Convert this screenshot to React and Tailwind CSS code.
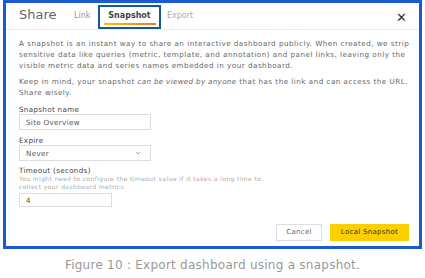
import React from 'react';

const font = { fontFamily: '"DejaVu Sans", "Open Sans", sans-serif' };

export default function App() {
    return (
        <div className="w-[425px] h-[278px] bg-white overflow-hidden" style={font}>
            {/* screenshot frame */}
            <div className="ml-[3px] w-[419px] h-[249px] border-[3px] border-[#1a5bd0] bg-white flex flex-col">
                {/* header */}
                <div className="h-[27px] flex items-end border-b border-[#ececec] pl-[13px] pr-[12px]">
                    <span className="text-[13px] text-[#666] pb-[5px] w-[55px]">Share</span>
                    <span className="text-[8px] text-[#999] pb-[7px] w-[24px]">Link</span>
                    <div className="h-[24px] w-[63px] border-[2.5px] border-[#14579c] flex flex-col items-center justify-end pb-[2px]">
                        <span className="text-[8px] font-bold text-[#444] leading-none">Snapshot</span>
                        <div className="mt-[3px] h-[2px] w-[52px] bg-gradient-to-r from-[#f6c400] to-[#f07818]" />
                    </div>
                    <span className="text-[8px] text-[#aaa] pb-[7px] ml-[6px]">Export</span>
                    <span className="ml-auto pb-[5px] text-[13px] text-[#333] leading-none">✕</span>
                </div>

                {/* body */}
                <div className="px-[13px] pt-[8px] text-[7.2px] tracking-[0.48px] leading-[11px] text-[#666] whitespace-nowrap">
                    <p>
                        A snapshot is an instant way to share an interactive dashboard publicly. When created, we strip
                        <br />
                        sensitive data like queries (metric, template, and annotation) and panel links, leaving only the
                        <br />
                        visible metric data and series names embedded in your dashboard.
                    </p>
                    <p className="mt-[5px]">
                        Keep in mind, your snapshot <i className="tracking-[0.3px]">can be viewed by anyone</i> that has the link and can access the URL.
                        <br />
                        Share wisely.
                    </p>

                    <div className="mt-[8px] leading-[7px] text-[#444] tracking-[0.3px]">Snapshot name</div>
                    <div className="mt-[1px] w-[132px] h-[16px] border border-[#ddd] flex items-center px-[6px] text-[#555] tracking-[0.3px]">Site Overview</div>

                    <div className="mt-[7px] leading-[7px] text-[#444] tracking-[0.3px]">Expire</div>
                    <div className="mt-[1px] w-[132px] h-[16px] border border-[#ddd] flex items-center px-[6px] text-[#555] tracking-[0.3px]">
                        <span>Never</span>
                        <svg className="ml-auto mr-[3px]" width="6" height="4" viewBox="0 0 6 4" fill="none" stroke="#999" strokeWidth="0.9">
                            <path d="M1 1 L3 3 L5 1" />
                        </svg>
                    </div>

                    <div className="mt-[6px] text-[#444] leading-[7px] tracking-[0.3px]">Timeout (seconds)</div>
                    <div className="mt-[1px] text-[6px] leading-[8px] text-[#aaa] tracking-[0.4px]">
                        You might need to configure the timeout value if it takes a long time to
                        <br />
                        collect your dashboard metrics.
                    </div>
                    <div className="mt-[2px] w-[93px] h-[14px] border border-[#ddd] flex items-center px-[6px] text-[#555]">4</div>
                </div>

                {/* footer */}
                <div className="mt-auto mb-[5px] flex justify-end gap-[8px] pr-[10px]">
                    <div className="h-[17px] w-[46px] border border-[#ddd] flex items-center justify-center text-[7px] text-[#666] tracking-[0.3px]">Cancel</div>
                    <div className="h-[17px] w-[79px] bg-[#fcd000] flex items-center justify-center text-[7px] text-[#333] tracking-[0.3px]">Local Snapshot</div>
                </div>
            </div>

            {/* caption */}
            <div className="mt-[7px] text-center text-[12px] tracking-[0.25px] text-[#999]">Figure 10 : Export dashboard using a snapshot.</div>
        </div>
    );
}
